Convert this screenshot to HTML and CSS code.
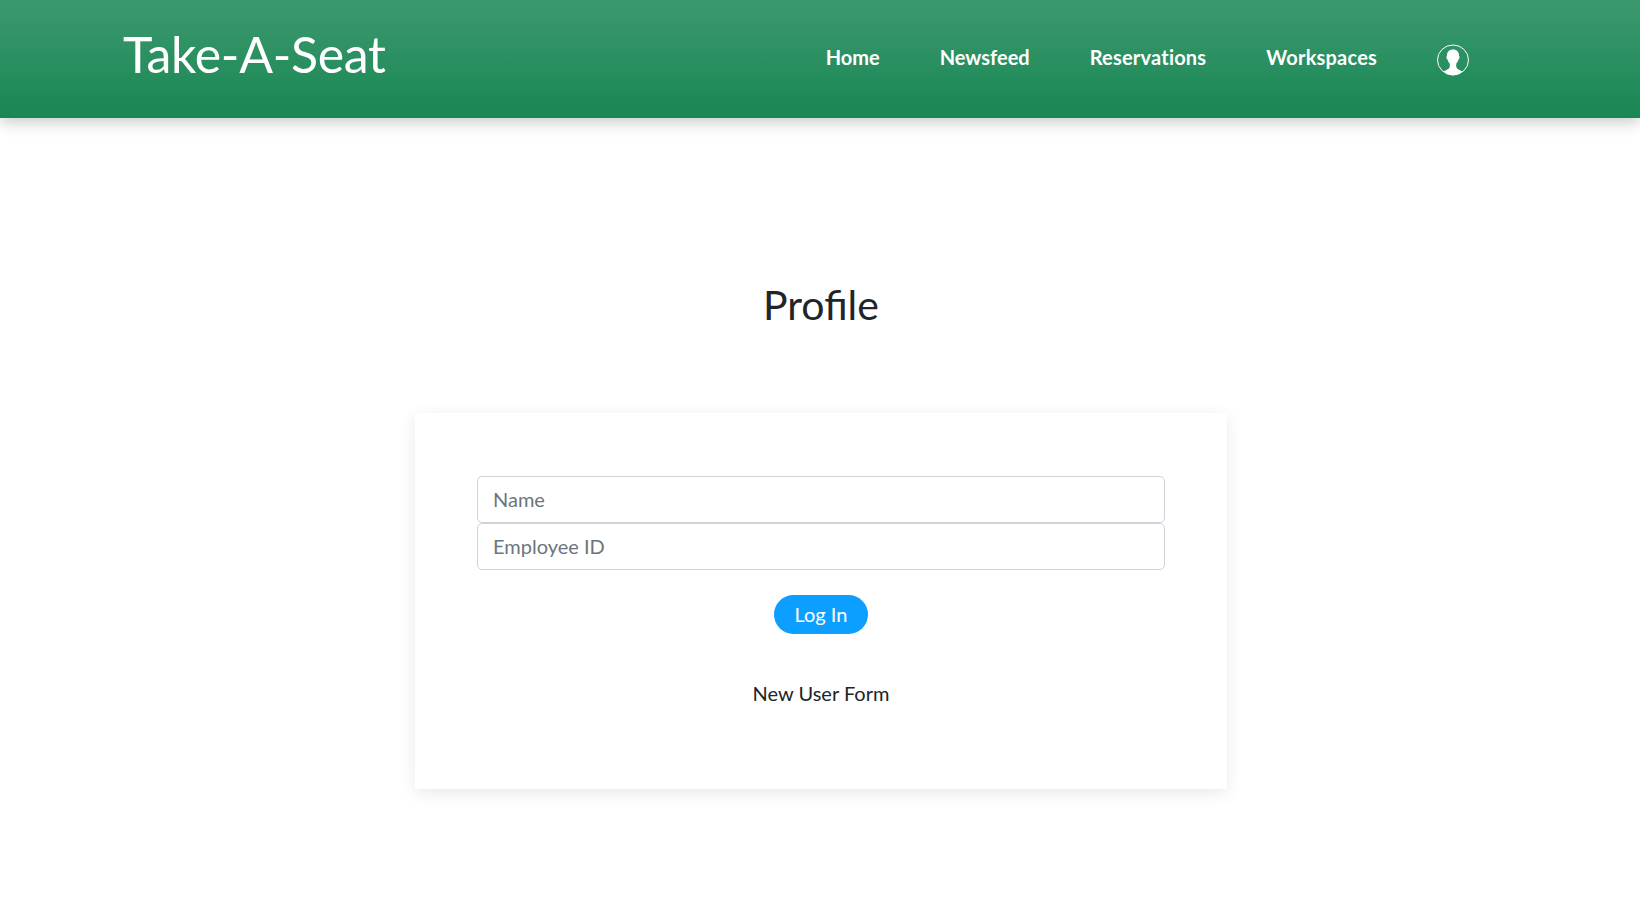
FILE: index.html
```html
<!DOCTYPE html>
<html lang="en">
<head>
<meta charset="utf-8">
<title>Take-A-Seat</title>
<link rel="stylesheet" href="styles.css">
</head>
<body>
<header class="navbar">
  <a class="brand">Take-A-Seat</a>
  <nav class="links">
    <a class="link">Home</a>
    <a class="link">Newsfeed</a>
    <a class="link link-wide">Reservations</a>
    <a class="link link-wide">Workspaces</a>
    <a class="avatar" aria-label="Profile">
      <svg viewBox="0 0 32 32" width="32" height="32">
        <ellipse cx="16" cy="16" rx="15.5" ry="15" fill="none" stroke="#fff"/>
        <path fill="#fff" d="M16 5.6c-4 0-6.200 2.600-6 6.400-.9.100-.6 3.300.6 3.600.3 1.700 1.100 3.100 2.200 4.200v2.800c-.3 2.500-3 3.200-6 4.800 2.400 2.300 5.700 3.900 9.200 3.900s6.800-1.600 9.200-3.900c-3-1.600-5.700-2.300-6-4.800v-2.800c1.100-1.100 1.900-2.500 2.200-4.200 1.200-.3 1.500-3.500.6-3.600.2-3.800-2-6.400-6-6.400z"/>
      </svg>
    </a>
  </nav>
</header>
<main class="page">
  <h1 class="heading">Profile</h1>
  <form class="card">
    <input class="field" type="text" placeholder="Name">
    <input class="field" type="text" placeholder="Employee ID">
    <button class="submit" type="button">Log In</button>
    <a class="new-user">New User Form</a>
  </form>
</main>
</body>
</html>
```
FILE: styles.css
```css
* { box-sizing: border-box; }
body {
  display: flex;
  flex-direction: column;
  min-height: 100vh;
  margin: 0;
  background: #fff;
  color: #212529;
  font: 400 20px/30px Lato, sans-serif;
}
.navbar {
  position: relative;
  display: flex;
  justify-content: space-between;
  height: 118px;
  padding: 17px 171px 0 123px;
  background: linear-gradient(#3c996e, #198754);
  box-shadow: 0 4px 15px rgba(0, 0, 0, .22);
  color: #fff;
}
.brand { font-size: 50px; line-height: 75px; letter-spacing: -.3px; }
.links { display: flex; padding-top: 25px; }
.link { margin-right: 60px; font-weight: 700; }
.link-wide { letter-spacing: .2px; font-variant-ligatures: none; }
.avatar { padding-top: 2px; }
.avatar svg { display: block; }
.page {
  display: flex;
  flex: 1;
  flex-direction: column;
  align-items: center;
  padding: 163px 0 0 2px;
}
.heading {
  margin: 0 0 84px;
  font-size: 41px;
  font-weight: 400;
  line-height: 48px;
}
.card {
  display: flex;
  flex-direction: column;
  align-items: center;
  width: 812px;
  height: 376px;
  padding: 63px 62px 0;
  background: #fff;
  box-shadow: 0 4px 16px rgba(0, 0, 0, .09);
}
.field {
  width: 100%;
  height: 47px;
  padding: 6px 15px 8px;
  border: 1px solid #ced4da;
  border-radius: 5px;
  background: #fff;
  color: #495057;
  font: inherit;
}
.field::placeholder { color: #6c757d; opacity: 1; }
.submit {
  width: 94px;
  height: 39px;
  margin: 25px 0 44px;
  padding: 0 0 2px;
  border: 0;
  border-radius: 20px;
  background: #0d9fff;
  color: #fff;
  font: inherit;
}
```
